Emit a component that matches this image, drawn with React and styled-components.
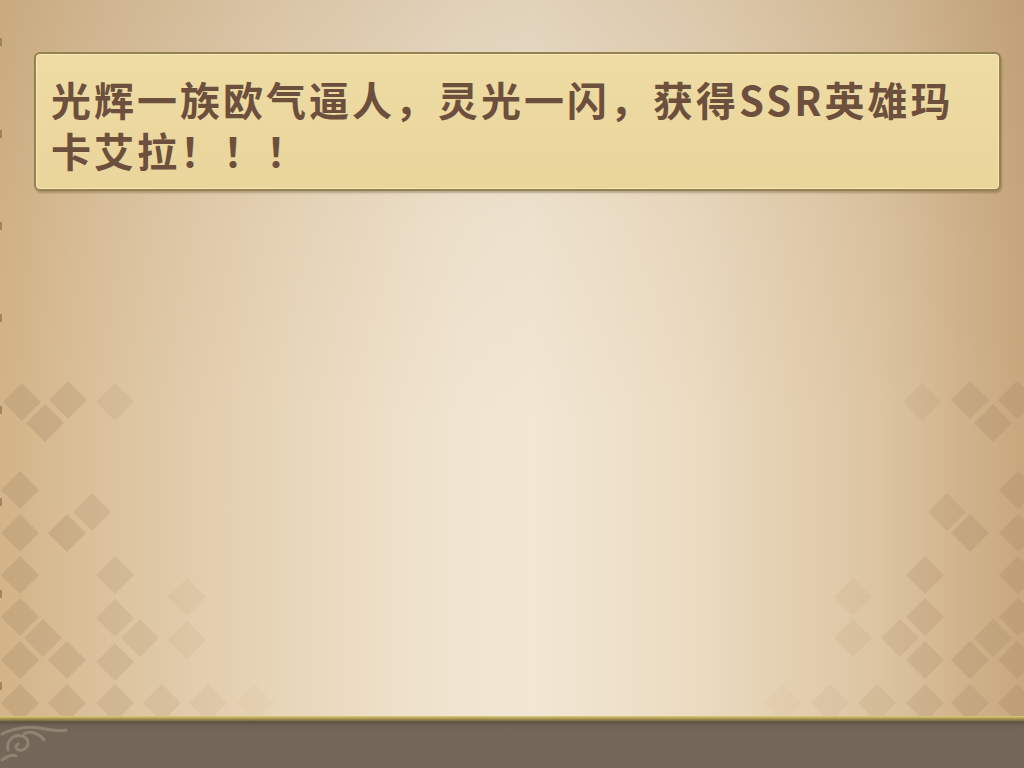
import React from "react";
import styled, { createGlobalStyle } from "styled-components";

const Global = createGlobalStyle`
  html, body { margin: 0; padding: 0; height: 100%; overflow: hidden; }
  #root { height: 100%; }
`;

const Screen = styled.div`
  width: 1024px;
  height: 768px;
  display: flex;
  flex-direction: column;
  overflow: hidden;
`;

const Stage = styled.main`
  position: relative;
  flex: 1;
  padding: 52px 23px 0 34px;
  background:
    linear-gradient(180deg, rgba(165, 135, 95, 0.22) 0px, rgba(165, 135, 95, 0.06) 220px, rgba(165, 135, 95, 0) 420px),
    linear-gradient(90deg, #d3b387 0%, #dbc29d 10%, #e8d6ba 28%, #f1e5d1 45%, #f2e7d4 52%, #ebdbc1 68%, #dcc4a1 86%, #c8a77d 100%);
`;

const Pattern = styled.svg`
  position: absolute;
  inset: 0;
  width: 100%;
  height: 100%;
  pointer-events: none;
`;

const Ticks = styled.div`
  position: absolute;
  left: 0;
  top: 0;
  bottom: 0;
  width: 2px;
  background: repeating-linear-gradient(180deg, transparent 0 38px, rgba(90, 65, 40, 0.4) 38px 46px, transparent 46px 92px);
`;

const MessageBox = styled.section`
  position: relative;
  box-sizing: border-box;
  height: 139px;
  padding: 20px 14px 0 15px;
  background: linear-gradient(180deg, #eedca4 0%, #ead59b 100%);
  border: 2px solid #95804f;
  border-radius: 6px;
  box-shadow: inset 0 0 0 1px rgba(255, 246, 210, 0.55), 1px 2px 2px rgba(95, 75, 40, 0.35);
`;

const Message = styled.p`
  margin: 0;
  font-family: "Noto Sans CJK SC", "Noto Sans", sans-serif;
  font-weight: 700;
  font-size: 40px;
  line-height: 51px;
  letter-spacing: 3px;
  color: #6c4f3d;
  word-break: break-all;
`;

const Footer = styled.footer`
  position: relative;
  height: 52px;
  flex-shrink: 0;
  background: linear-gradient(180deg, #dccb82 0px, #b9a55a 2px, #8a7a45 4px, #5c5242 6px, #6c6052 9px, #736759 14px, #736759 100%);
`;

const Flourish = styled.svg`
  position: absolute;
  left: 0;
  top: 4px;
  width: 80px;
  height: 48px;
`;

const left = [
  [22, 402, 0.5], [68, 400, 0.45], [45, 423, 0.5], [115, 402, 0.22],
  [20, 490, 0.5], [92, 512, 0.4], [67, 533, 0.5], [20, 533, 0.5],
  [20, 575, 0.5], [115, 575, 0.33], [187, 597, 0.16],
  [20, 617, 0.5], [43, 638, 0.45], [115, 618, 0.33], [140, 638, 0.28], [187, 640, 0.16],
  [20, 660, 0.5], [67, 660, 0.45], [115, 662, 0.35],
  [20, 703, 0.5], [67, 703, 0.45], [115, 703, 0.35], [162, 703, 0.25], [208, 703, 0.15], [255, 703, 0.08],
];

const right = [
  [922, 402, 0.22], [970, 400, 0.45], [993, 423, 0.5], [1017, 400, 0.5],
  [1018, 490, 0.5], [947, 512, 0.4], [970, 533, 0.5], [1018, 533, 0.5],
  [925, 575, 0.38], [1018, 575, 0.5], [853, 597, 0.16],
  [925, 617, 0.38], [900, 638, 0.32], [853, 638, 0.18], [993, 638, 0.45], [1018, 617, 0.5],
  [970, 660, 0.5], [1017, 660, 0.5], [925, 660, 0.4],
  [783, 703, 0.08], [830, 703, 0.15], [877, 703, 0.25], [925, 703, 0.35], [970, 703, 0.45], [1017, 703, 0.5],
];

const Diamond = ({ x, y, o }) => (
  <path
    d={`M${x} ${y - 19} L${x + 19} ${y} L${x} ${y + 19} L${x - 19} ${y} Z`}
    fill="#a98c68"
    opacity={o * 0.62}
  />
);

export default function App() {
  return (
    <>
      <Global />
      <Screen>
        <Stage>
          <Pattern viewBox="0 0 1024 716" preserveAspectRatio="none" aria-hidden="true">
            {[...left, ...right].map(([x, y, o], i) => (
              <Diamond key={i} x={x} y={y} o={o} />
            ))}
          </Pattern>
          <Ticks />
          <MessageBox>
            <Message>光辉一族欧气逼人，灵光一闪，获得SSR英雄玛卡艾拉！！！</Message>
          </MessageBox>
        </Stage>
        <Footer>
          <Flourish viewBox="0 0 80 48" aria-hidden="true">
            <g fill="none" stroke="#a89a84" strokeWidth="3" strokeLinecap="round" opacity="0.55">
              <path d="M2 14 C14 8 28 6 40 8 C52 10 60 12 66 10" />
              <path d="M8 30 C6 20 14 14 22 16 C30 18 30 28 22 30 C16 31 14 26 18 24" />
              <path d="M24 14 C30 10 40 14 44 20" />
              <path d="M2 40 C8 36 12 34 16 36" />
            </g>
          </Flourish>
        </Footer>
      </Screen>
    </>
  );
}
